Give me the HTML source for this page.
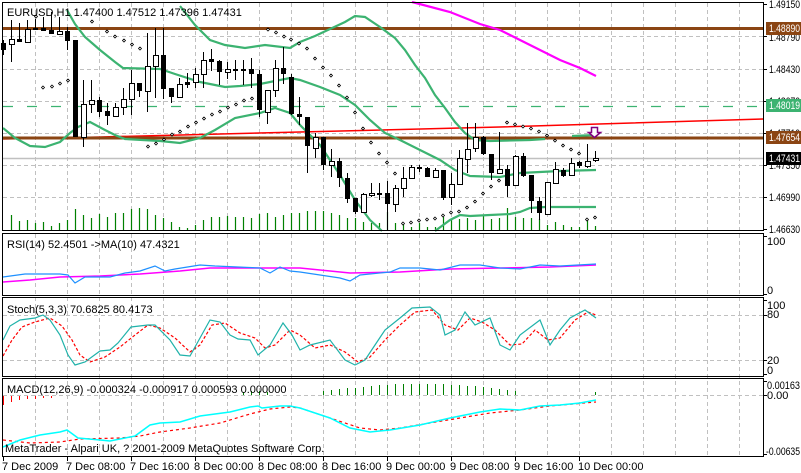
<!DOCTYPE html>
<html><head><meta charset="utf-8"><style>
html,body{margin:0;padding:0;background:#fff;}
svg{display:block;}
text{font-family:"Liberation Sans",sans-serif;font-size:11px;fill:#000;}
.ax{font-size:10.5px;}
</style></head><body>
<svg width="801" height="473" viewBox="0 0 801 473" xmlns="http://www.w3.org/2000/svg">
<rect width="801" height="473" fill="#fff"/>
<g stroke="#c0c0c0" stroke-dasharray="4,3" stroke-width="1">
<path d="M35.5 3V456M67.5 3V456M99.5 3V456M131.5 3V456M163.5 3V456M195.5 3V456M227.5 3V456M259.5 3V456M291.5 3V456M323.5 3V456M355.5 3V456M387.5 3V456M419.5 3V456M451.5 3V456M483.5 3V456M515.5 3V456M547.5 3V456M579.5 3V456M611.5 3V456M643.5 3V456M675.5 3V456M707.5 3V456M739.5 3V456"/>
<path d="M3 36.5H763M3 69.5H763M3 101.5H763M3 133.5H763M3 165.5H763M3 197.5H763M3 315.5H763M3 360.5H763M3 395.5H763"/>
</g>
<path stroke="#008000" stroke-width="1.2" d="M11.5 215V230M19.5 221V230M27.5 220V230M35.5 223V230M43.5 222V230M51.5 226V230M59.5 223V230M67.5 220V230M75.5 209V230M83.5 215V230M91.5 218V230M99.5 214V230M107.5 217V230M115.5 213V230M123.5 213V230M131.5 209V230M139.5 208V230M147.5 209V230M155.5 215V230M163.5 218V230M171.5 222V230M179.5 227V230M187.5 228V230M195.5 225V230M203.5 220V230M211.5 217V230M219.5 217V230M227.5 216V230M235.5 217V230M243.5 217V230M251.5 218V230M259.5 214V230M267.5 213V230M275.5 217V230M283.5 215V230M291.5 213V230M299.5 213V230M307.5 211V230M315.5 211V230M323.5 211V230M331.5 213V230M339.5 215V230M347.5 218V230M355.5 218V230M363.5 222V230M371.5 223V230M379.5 223V230M387.5 212V230M395.5 223V230M403.5 223V230M411.5 227V230M419.5 223V230M427.5 227V230M435.5 227V230M443.5 217V230M451.5 220V230M459.5 219V230M467.5 218V230M475.5 220V230M483.5 216V230M491.5 219V230M499.5 218V230M507.5 208V230M515.5 217V230M523.5 218V230M531.5 218V230M539.5 219V230M547.5 225V230M555.5 222V230M563.5 225V230M571.5 227V230M579.5 227V230M587.5 220V230M595.5 226V230"/>
<path d="M3 158.5H763" stroke="#c0c0c0" stroke-width="1.5"/>
<path d="M3 106.5H763" stroke="#3cb371" stroke-width="1.2" stroke-dasharray="10,14"/>
<path d="M3 139L100 137L300 132L500 127L764 119" stroke="#ff0000" stroke-width="1.5" fill="none"/>
<path d="M3 28.5H764M3 138H764" stroke="#8b4513" stroke-width="3"/>
<polyline fill="none" stroke="#ff00ff" stroke-width="2.2" points="412,2 450,12 480,24 500,30 520,40 540,50 560,60 580,68 596,76"/>
<g fill="none" stroke="#3cb371" stroke-width="2.2">
<polyline points="67,10 75,24 85,37 100,50 115,62 123,68 160,69 175,74 200,82 225,87 240,86 260,84 290,78 300,80 320,87 340,95 355,105 370,120 385,133 400,140 420,150 440,160 455,170 470,176 500,177 520,173 540,172 560,171 596,170"/>
<polyline points="180,6 195,25 210,40 225,45 245,48 265,45 290,48 300,42 315,36 330,29 345,22 355,16 365,17 380,27 395,38 405,50 415,65 425,78 435,95 445,108 455,122 465,133 475,140 490,141 530,140 545,139"/>
<polyline points="572,136 596,135"/>
<polyline points="3,128 15,138 30,146 45,147 60,142 70,133 78,127 90,122 105,130 115,135 125,139 160,141 180,143 200,138 215,130 235,118 260,113 275,108 290,113 300,125 320,145 340,175 355,200 370,220 382,231"/>
<polyline points="435,231 450,220 460,215 470,216 490,215 510,214 520,212 530,208 545,207 596,207"/>
</g>
<g fill="#fff" stroke="#000" stroke-width="0.8">
<path d="M36 15l1.5 1.5-1.5 1.5-1.5-1.5zM43 86l1.5 1.5-1.5 1.5-1.5-1.5zM52 85l1.5 1.5-1.5 1.5-1.5-1.5zM60 82l1.5 1.5-1.5 1.5-1.5-1.5zM68 79l1.5 1.5-1.5 1.5-1.5-1.5zM92 20l1.5 1.5-1.5 1.5-1.5-1.5zM107 30l1.5 1.5-1.5 1.5-1.5-1.5zM115 35l1.5 1.5-1.5 1.5-1.5-1.5zM124 39l1.5 1.5-1.5 1.5-1.5-1.5zM132 43l1.5 1.5-1.5 1.5-1.5-1.5zM140 47l1.5 1.5-1.5 1.5-1.5-1.5zM148 145l1.5 1.5-1.5 1.5-1.5-1.5zM156 142l1.5 1.5-1.5 1.5-1.5-1.5zM164 138l1.5 1.5-1.5 1.5-1.5-1.5zM172 133l1.5 1.5-1.5 1.5-1.5-1.5zM180 130l1.5 1.5-1.5 1.5-1.5-1.5zM188 125l1.5 1.5-1.5 1.5-1.5-1.5zM196 121l1.5 1.5-1.5 1.5-1.5-1.5zM204 117l1.5 1.5-1.5 1.5-1.5-1.5zM212 113l1.5 1.5-1.5 1.5-1.5-1.5zM220 110l1.5 1.5-1.5 1.5-1.5-1.5zM228 106l1.5 1.5-1.5 1.5-1.5-1.5zM236 103l1.5 1.5-1.5 1.5-1.5-1.5zM244 99l1.5 1.5-1.5 1.5-1.5-1.5zM252 97l1.5 1.5-1.5 1.5-1.5-1.5zM268 28l1.5 1.5-1.5 1.5-1.5-1.5zM276 31l1.5 1.5-1.5 1.5-1.5-1.5zM284 35l1.5 1.5-1.5 1.5-1.5-1.5zM291 38l1.5 1.5-1.5 1.5-1.5-1.5zM299 42l1.5 1.5-1.5 1.5-1.5-1.5zM307 47l1.5 1.5-1.5 1.5-1.5-1.5zM315 57l1.5 1.5-1.5 1.5-1.5-1.5zM323 66l1.5 1.5-1.5 1.5-1.5-1.5zM331 74l1.5 1.5-1.5 1.5-1.5-1.5zM339 84l1.5 1.5-1.5 1.5-1.5-1.5zM347 96l1.5 1.5-1.5 1.5-1.5-1.5zM355 111l1.5 1.5-1.5 1.5-1.5-1.5zM363 127l1.5 1.5-1.5 1.5-1.5-1.5zM371 141l1.5 1.5-1.5 1.5-1.5-1.5zM379 152l1.5 1.5-1.5 1.5-1.5-1.5zM387 161l1.5 1.5-1.5 1.5-1.5-1.5zM395 172l1.5 1.5-1.5 1.5-1.5-1.5zM403 222l1.5 1.5-1.5 1.5-1.5-1.5zM411 221l1.5 1.5-1.5 1.5-1.5-1.5zM419 219l1.5 1.5-1.5 1.5-1.5-1.5zM427 218l1.5 1.5-1.5 1.5-1.5-1.5zM435 217l1.5 1.5-1.5 1.5-1.5-1.5zM443 214l1.5 1.5-1.5 1.5-1.5-1.5zM451 211l1.5 1.5-1.5 1.5-1.5-1.5zM459 210l1.5 1.5-1.5 1.5-1.5-1.5zM467 206l1.5 1.5-1.5 1.5-1.5-1.5zM475 200l1.5 1.5-1.5 1.5-1.5-1.5zM483 192l1.5 1.5-1.5 1.5-1.5-1.5zM491 185l1.5 1.5-1.5 1.5-1.5-1.5zM499 179l1.5 1.5-1.5 1.5-1.5-1.5zM507 121l1.5 1.5-1.5 1.5-1.5-1.5zM515 123l1.5 1.5-1.5 1.5-1.5-1.5zM523 125l1.5 1.5-1.5 1.5-1.5-1.5zM531 127l1.5 1.5-1.5 1.5-1.5-1.5zM539 130l1.5 1.5-1.5 1.5-1.5-1.5zM547 134l1.5 1.5-1.5 1.5-1.5-1.5zM555 139l1.5 1.5-1.5 1.5-1.5-1.5zM563 144l1.5 1.5-1.5 1.5-1.5-1.5zM571 148l1.5 1.5-1.5 1.5-1.5-1.5zM579 152l1.5 1.5-1.5 1.5-1.5-1.5zM587 218l1.5 1.5-1.5 1.5-1.5-1.5zM595 216l1.5 1.5-1.5 1.5-1.5-1.5z"/>
</g>
<path stroke="#000" stroke-width="1" d="M3.5 40V55M11.5 20V62M19.5 23V40M27.5 20V43M35.5 19V30M43.5 17V30M51.5 12V33M59.5 17V34M67.5 27V50M75.5 40V137M83.5 80V147M91.5 80V113M99.5 97V117M107.5 103V125M115.5 103V117M123.5 88V115M131.5 70V115M139.5 83V97M147.5 33V112M155.5 28V98M163.5 28V99M171.5 88V103M179.5 78V98M187.5 73V88M195.5 68V88M203.5 52V88M211.5 49V71M219.5 60V85M227.5 62V79M235.5 60V80M243.5 60V85M251.5 58V88M259.5 70V117M267.5 90V124M275.5 60V97M283.5 47V84M291.5 74V115M299.5 97V125M307.5 117V173M315.5 133V158M323.5 137V170M331.5 149V177M339.5 158V187M347.5 173V203M355.5 198V214M363.5 193V213M371.5 183V197M379.5 183V200M387.5 181V230M395.5 185V212M403.5 167V197M411.5 165V178M419.5 165V172M427.5 167V177M435.5 168V178M443.5 170V200M451.5 173V205M459.5 150V185M467.5 123V173M475.5 123V152M483.5 136V155M491.5 154V180M499.5 132V173M507.5 165V197M515.5 155V186M523.5 153V177M531.5 175V213M539.5 197V220M547.5 182V214M555.5 162V183M563.5 168V177M571.5 158V176M579.5 161V168M587.5 144V168M595.5 151V162"/>
<path fill="#000" d="M1 43h5v7h-5zM17 39h5v3h-5zM33 28h5v2h-5zM41 28h5v3h-5zM49 30h5v4h-5zM65 31h5v10h-5zM73 40h5v97h-5zM97 100h5v12h-5zM105 111h5v5h-5zM137 83h5v8h-5zM161 55h5v34h-5zM169 88h5v9h-5zM185 82h5v3h-5zM209 59h5v3h-5zM217 61h5v11h-5zM233 69h5v2h-5zM241 69h5v2h-5zM249 69h5v5h-5zM257 74h5v36h-5zM281 68h5v6h-5zM289 77h5v37h-5zM297 114h5v3h-5zM305 117h5v29h-5zM321 137h5v28h-5zM337 161h5v17h-5zM345 178h5v21h-5zM353 198h5v14h-5zM377 193h5v2h-5zM385 193h5v11h-5zM417 167h5v2h-5zM425 168h5v9h-5zM441 170h5v28h-5zM481 137h5v17h-5zM489 154h5v19h-5zM505 169h5v17h-5zM521 156h5v20h-5zM529 175h5v26h-5zM537 201h5v12h-5zM561 170h5v6h-5zM577 162h5v4h-5z"/>
<path fill="#fff" stroke="#000" stroke-width="1" d="M9.5 39.5h5v5h-5zM25.5 29.5h5v13h-5zM57.5 31.5h5v3h-5zM81.5 104.5h5v33h-5zM89.5 100.5h5v4h-5zM113.5 107.5h5v9h-5zM121.5 99.5h5v8h-5zM129.5 83.5h5v16h-5zM145.5 66.5h5v25h-5zM153.5 55.5h5v11h-5zM177.5 84.5h5v13h-5zM193.5 74.5h5v8h-5zM201.5 60.5h5v14h-5zM225.5 69.5h5v3h-5zM265.5 90.5h5v22h-5zM273.5 68.5h5v22h-5zM313.5 137.5h5v11h-5zM329.5 161.5h5v4h-5zM361.5 194.5h5v18h-5zM369.5 193.5h5v2h-5zM393.5 188.5h5v16h-5zM401.5 178.5h5v10h-5zM409.5 167.5h5v11h-5zM433.5 170.5h5v7h-5zM449.5 184.5h5v13h-5zM457.5 158.5h5v26h-5zM465.5 149.5h5v10h-5zM473.5 137.5h5v11h-5zM497.5 169.5h5v4h-5zM513.5 156.5h5v29h-5zM545.5 182.5h5v32h-5zM553.5 169.5h5v14h-5zM569.5 163.5h5v12h-5zM585.5 161.5h5v5h-5zM593.5 158.5h5v2h-5z"/>
<path d="M591.5 127.5h6v5h3l-6 5-6-5h3z" fill="#fff" stroke="#800080" stroke-width="1.5"/>
<polyline fill="none" stroke="#ff00ff" stroke-width="1.5" points="3,282 30,280 60,277 100,276 140,274 180,271 210,268 300,268 350,273 400,272 450,269 500,268 550,267 596,265"/>
<polyline fill="none" stroke="#1e90ff" stroke-width="1.2" points="3,277 25,274 60,274 68,275 75,283 85,277 110,277 125,273 140,271 155,266 165,271 175,269 200,265 215,266 260,268 270,273 280,267 290,271 300,272 320,275 340,278 350,281 360,275 390,272 400,268 420,268 440,270 460,265 480,265 500,268 520,269 540,265 560,266 596,264"/>
<polyline fill="none" stroke="#ff0000" stroke-width="1.2" stroke-dasharray="3,2" points="3,356 12,340 22,327 35,322 50,318 62,326 72,340 80,355 90,362 105,357 120,347 135,335 148,325 160,328 175,338 190,352 200,345 212,325 225,323 240,333 255,338 265,348 275,345 290,330 300,335 315,348 330,345 345,352 358,362 370,357 385,340 400,325 415,312 432,310 445,325 458,330 470,318 482,322 495,330 510,345 522,344 535,330 548,340 560,338 575,320 588,312 596,315"/>
<polyline fill="none" stroke="#20b2aa" stroke-width="1.2" points="3,340 10,326 20,320 35,318 43,315 50,320 60,335 68,355 75,365 85,362 100,351 110,350 118,343 131,327 148,325 155,325 170,340 180,355 190,356 210,320 220,322 230,335 238,339 250,340 258,355 270,345 283,323 292,335 300,350 310,345 330,340 345,360 355,365 365,360 375,345 385,330 400,318 412,308 430,307 440,315 445,335 455,330 465,312 475,325 490,318 500,345 510,350 520,335 540,320 550,345 560,330 570,318 585,310 596,318"/>
<path stroke="#ff0000" stroke-width="1" d="M3.5 396V405M11.5 396V402M19.5 396V400M27.5 396V399M35.5 396V399M43.5 396V398M51.5 396V398"/>
<path stroke="#008000" stroke-width="1" d="M243.5 395V392M251.5 395V391M259.5 395V391M267.5 395V392M323.5 395V391M331.5 395V390M339.5 395V389M347.5 395V388M355.5 395V388M363.5 395V387M371.5 395V386M379.5 395V385M387.5 395V385M395.5 395V384M403.5 395V384M411.5 395V384M419.5 395V384M427.5 395V384M435.5 395V384M443.5 395V384M451.5 395V385M459.5 395V385M467.5 395V386M475.5 395V386M483.5 395V387M491.5 395V388M499.5 395V389M507.5 395V390M515.5 395V391M595.5 395V392"/>
<polyline fill="none" stroke="#ff0000" stroke-width="1.2" stroke-dasharray="3,3" points="3,440 30,443 60,442 80,439 120,438 140,436 160,432 190,428 220,423 250,414 270,409 290,407 300,408 330,418 360,428 380,430 400,428 430,423 460,418 490,413 520,410 550,406 596,402"/>
<polyline fill="none" stroke="#00ffff" stroke-width="1.5" points="3,447 20,440 40,435 60,432 67,430 78,438 100,440 110,441 125,438 135,436 150,425 160,423 180,422 200,416 230,412 250,407 258,406 262,408 280,406 290,406 300,408 330,418 350,428 370,432 390,430 420,425 450,418 480,412 500,409 520,410 540,406 560,405 580,403 596,400"/>
<g fill="none" stroke="#000" stroke-width="1">
<rect x="2.5" y="2.5" width="761" height="228"/>
<rect x="2.5" y="233.5" width="761" height="62"/>
<rect x="2.5" y="297.5" width="761" height="79"/>
<rect x="2.5" y="378.5" width="761" height="78"/>
<path d="M763 4.5h4M763 36.5h4M763 69.5h4M763 101.5h4M763 133.5h4M763 165.5h4M763 197.5h4M763 229.5h4M763 236.5h4M763 294.5h4M763 300.5h4M763 315.5h4M763 360.5h4M763 374.5h4M763 381.5h4M763 395.5h4M763 454.5h4"/>
<path d="M3.5 457v4M67.5 457v4M131.5 457v4M195.5 457v4M259.5 457v4M323.5 457v4M387.5 457v4M451.5 457v4M515.5 457v4M579.5 457v4"/>
</g>
<g class="ax">
<text x="769" y="8" textLength="31" lengthAdjust="spacingAndGlyphs">1.49150</text>
<text x="769" y="41" textLength="31" lengthAdjust="spacingAndGlyphs">1.48790</text>
<text x="769" y="73" textLength="31" lengthAdjust="spacingAndGlyphs">1.48430</text>
<text x="769" y="105" textLength="31" lengthAdjust="spacingAndGlyphs">1.48070</text>
<text x="769" y="137" textLength="31" lengthAdjust="spacingAndGlyphs">1.47710</text>
<text x="769" y="169" textLength="31" lengthAdjust="spacingAndGlyphs">1.47350</text>
<text x="769" y="201" textLength="31" lengthAdjust="spacingAndGlyphs">1.46990</text>
<text x="769" y="233" textLength="31" lengthAdjust="spacingAndGlyphs">1.46630</text>
<rect x="766" y="22" width="35" height="13" fill="#8b4513"/><text x="769" y="32" style="fill:#fff" textLength="31" lengthAdjust="spacingAndGlyphs">1.48890</text>
<rect x="766" y="99" width="35" height="13" fill="#3cb371"/><text x="769" y="109" style="fill:#fff" textLength="31" lengthAdjust="spacingAndGlyphs">1.48019</text>
<rect x="766" y="131" width="35" height="13" fill="#8b4513"/><text x="769" y="141" style="fill:#fff" textLength="31" lengthAdjust="spacingAndGlyphs">1.47654</text>
<rect x="766" y="152" width="35" height="13" fill="#000"/><text x="769" y="162" style="fill:#fff" textLength="31" lengthAdjust="spacingAndGlyphs">1.47431</text>
<text x="767" y="245">100</text>
<text x="767" y="294">0</text>
<text x="767" y="309">100</text>
<text x="767" y="318">80</text>
<text x="767" y="364">20</text>
<text x="767" y="374">0</text>
<text x="767" y="389" textLength="33" lengthAdjust="spacingAndGlyphs">0.00163</text>
<text x="767" y="399">0.00</text>
<text x="766" y="455" textLength="34" lengthAdjust="spacingAndGlyphs">-0.00635</text>
</g>
<text x="7" y="16">EURUSD,H1  1.47400 1.47512 1.47396 1.47431</text>
<text x="7" y="248">RSI(14) 52.4501  -&gt;MA(10) 47.4321</text>
<text x="7" y="313">Stoch(5,3,3) 70.6825 80.4173</text>
<text x="7" y="393">MACD(12,26,9) -0.000324 -0.000917 0.000593 0.000000</text>
<text x="5" y="452">MetaTrader - Alpari UK, ? 2001-2009 MetaQuotes Software Corp.</text>
<text x="2" y="470">7 Dec 2009</text>
<text x="66" y="470">7 Dec 08:00</text>
<text x="130" y="470">7 Dec 16:00</text>
<text x="194" y="470">8 Dec 00:00</text>
<text x="258" y="470">8 Dec 08:00</text>
<text x="322" y="470">8 Dec 16:00</text>
<text x="386" y="470">9 Dec 00:00</text>
<text x="450" y="470">9 Dec 08:00</text>
<text x="514" y="470">9 Dec 16:00</text>
<text x="578" y="470">10 Dec 00:00</text>
</svg>
</body></html>
